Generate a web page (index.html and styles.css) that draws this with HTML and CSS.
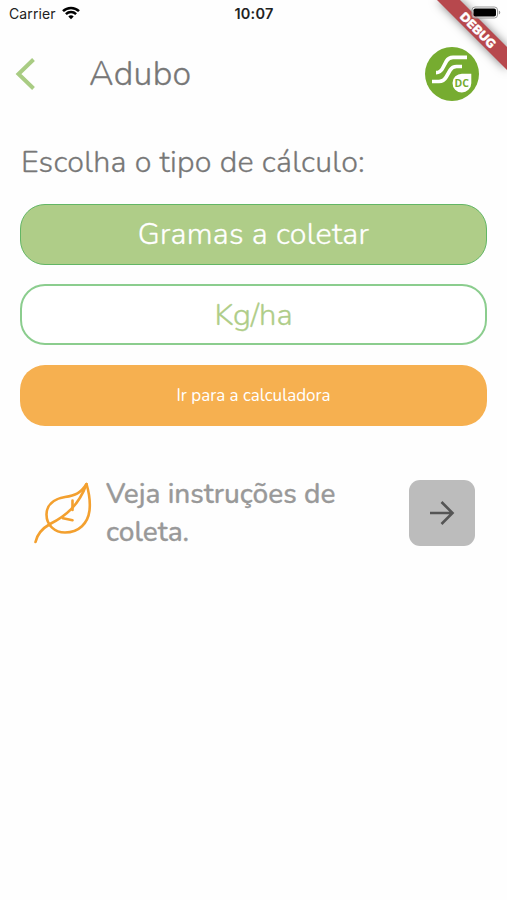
FILE: index.html
```html
<!DOCTYPE html>
<html lang="pt-BR">
<head>
  <meta charset="UTF-8" />
  <meta name="viewport" content="width=device-width, initial-scale=1.0" />
  <title>Adubo</title>
  <link rel="stylesheet" href="styles.css">
</head>
<body>

  <svg class="debug" width="90" height="90" viewBox="0 0 90 90">
    <path class="faixa" d="M20 0h23l47 47v23z" />
    <text transform="translate(61 30) rotate(45)" x="0" y="4.500" text-anchor="middle">DEBUG</text>
  </svg>

  <div class="status">
    <div class="operadora">
      <span class="carrier">Carrier</span>
      <svg class="wifi" width="18" height="14" viewBox="0 0 18 14" fill="none" stroke="#000" stroke-width="2.5">
        <path d="M1 5.2C5.4 .8 12.6 .8 17 5.2" />
        <path d="M3.9 8.2c2.9-2.8 7.3-2.8 10.2 0" />
        <path d="M6.3 10.4c1.6-1.4 3.8-1.4 5.4 0L9 13.2z" fill="#000" stroke="none" />
      </svg>
    </div>
    <span class="hora">10:07</span>
    <svg class="bateria" width="30" height="14" viewBox="0 0 30 14">
      <rect x="1" y="1" width="25.500" height="11" rx="3" fill="#fff" fill-opacity=".5" stroke="#999" />
      <rect x="2.500" y="2.500" width="22.500" height="8" rx="1.8" fill="#000" />
      <path d="M27.800 4.500v4c2-.7 2-3.300 0-4z" fill="#999" />
    </svg>
  </div>

  <header class="topo">
    <svg class="voltar" width="20" height="34" viewBox="0 0 20 34" fill="none" stroke="#a9cc83" stroke-width="4">
      <path d="M18.500 2.500L3.500 17l15 14.500" />
    </svg>
    <h1>Adubo</h1>
    <svg class="logo" width="54" height="54" viewBox="0 0 54 54">
      <circle cx="27" cy="27" r="27" fill="#76ac30" />
      <g fill="none" stroke="#fff" stroke-width="3.700">
        <path d="M42 10.300H28C24.500 10.300 23 11.300 21.500 14l-4 7.500C16 24.500 14.500 25.600 11 25.600" />
        <path d="M37 19.500H31.500C28 19.500 26.700 20.500 25.200 23l-4 7C19.200 33.500 17.500 34.500 14 34.500H7" />
      </g>
      <path d="M37 26.700h9.300v9.600A9.400 9.400 0 1 1 37 26.700z" fill="#fff" />
      <text class="logo_texto" x="36.800" y="40" text-anchor="middle">DC</text>
    </svg>
  </header>

  <main class="conteudo">
    <h2>Escolha o tipo de cálculo:</h2>

    <button type="button" class="opcao ativa">Gramas a coletar</button>
    <button type="button" class="opcao">Kg/ha</button>
    <button type="button" class="opcao calculadora">Ir para a calculadora</button>

    <div class="instrucoes">
      <svg class="folha" width="60" height="64" viewBox="0 0 60 64" fill="none" stroke="#f3a02f" stroke-width="2.600" stroke-linecap="round" stroke-linejoin="round">
        <path d="M1.500 61C3 54 9 47 16 43 32 35 45 24 52.500 3" />
        <path d="M52.500 3C47 12 41 14.500 31 16 19 18 12.500 24.500 12.500 33.500c0 11 8.500 18 18.500 18 14 0 23-9.500 24.500-22 1-9-.5-18-3-26.500z" />
        <path d="M38.500 19.500V29M29 37.300l9.500 1.900" />
      </svg>
      <p>Veja instruções de<br>coleta.</p>
      <button type="button" class="seta" aria-label="Ver instruções">
        <svg width="26" height="26" viewBox="0 0 26 26" fill="none" stroke="#555" stroke-width="2.600">
          <path d="M1 13h22M12.500 2L23.500 13l-11 11" />
        </svg>
      </button>
    </div>
  </main>

</body>
</html>
```
FILE: styles.css
```css
* {
  box-sizing: border-box;
}

body {
  margin: 0;
  position: relative;
  background-color: #fefefe;
  color: #777;
  font-family: Nunito, "Open Sans", sans-serif;
}

button {
  padding: 0;
  font-family: inherit;
  cursor: pointer;
}

/* faixa no canto superior direito */
.debug {
  position: absolute;
  top: 0;
  right: 0;
  overflow: hidden;
}

.faixa {
  fill: #b7484d;
  filter: drop-shadow(0 0 5px rgba(0, 0, 0, 0.5));
}

.debug text {
  fill: #fff;
  font: 900 12.500px Nunito, "Open Sans", sans-serif;
  stroke: #fff;
  stroke-width: 0.3px;
}

.status {
  position: relative;
  display: grid;
  grid-template-columns: 1fr auto 1fr;
  align-items: center;
  height: 27px;
  padding: 0 6px 0 9px;
  color: #222;
  font-family: Inter, sans-serif;
}

.operadora {
  display: flex;
  align-items: center;
  gap: 6px;
}

.operadora svg {
  margin-top: -2px;
}

.carrier {
  font-size: 14px;
  letter-spacing: 0.1px;
}

.hora {
  margin-right: 2px;
  font-size: 14.500px;
  font-weight: 600;
  letter-spacing: 0.2px;
}

.bateria {
  justify-self: end;
  margin-top: -1px;
}

.topo {
  display: flex;
  align-items: center;
  height: 94px;
  padding: 0 28px 0 15px;
}

.topo h1 {
  margin: 0 auto 0 54px;
  font-size: 34px;
  font-weight: 300;
  letter-spacing: 0.3px;
  -webkit-text-stroke: 0.3px;
}

.logo_texto {
  fill: #76ac30;
  font: bold 10.500px "Open Sans", sans-serif;
}

.conteudo {
  display: flex;
  flex-direction: column;
  gap: 19.500px;
  padding: 19px 20px 0 20px;
}

.conteudo h2 {
  margin: 0 0 0 1px;
  font-size: 30.500px;
  font-weight: 300;
  line-height: 44px;
  letter-spacing: 0.25px;
  -webkit-text-stroke: 0.3px;
}

.opcao {
  height: 61px;
  border: 2px solid #8bcd8e;
  border-radius: 25px;
  background-color: #fff;
  color: #afcd88;
  font-size: 31px;
  font-weight: 300;
  line-height: 40px;
  -webkit-text-stroke: 0.3px;
}

.ativa {
  border: 1.500px solid #62b665;
  background-color: #afcd88;
  color: #fff;
  font-size: 30.500px;
  letter-spacing: 0.25px;
}

.calculadora {
  border: none;
  background-color: #f6b050;
  color: #fff;
  font-size: 17px;
  font-weight: 400;
  padding-top: 2px;
  -webkit-text-stroke: 0;
}

.instrucoes {
  display: flex;
  align-items: center;
  height: 68px;
  margin-top: 33.500px;
  padding: 0 12px 0 14px;
}

.instrucoes p {
  margin: 0 auto 0 12px;
  color: #999;
  font-size: 28px;
  font-weight: 500;
  line-height: 38px;
  white-space: nowrap;
  -webkit-text-stroke: 0.3px;
}

.seta {
  display: flex;
  align-items: center;
  justify-content: center;
  width: 66px;
  height: 66px;
  border: none;
  border-radius: 11px;
  background-color: #bcbcbc;
}
```
